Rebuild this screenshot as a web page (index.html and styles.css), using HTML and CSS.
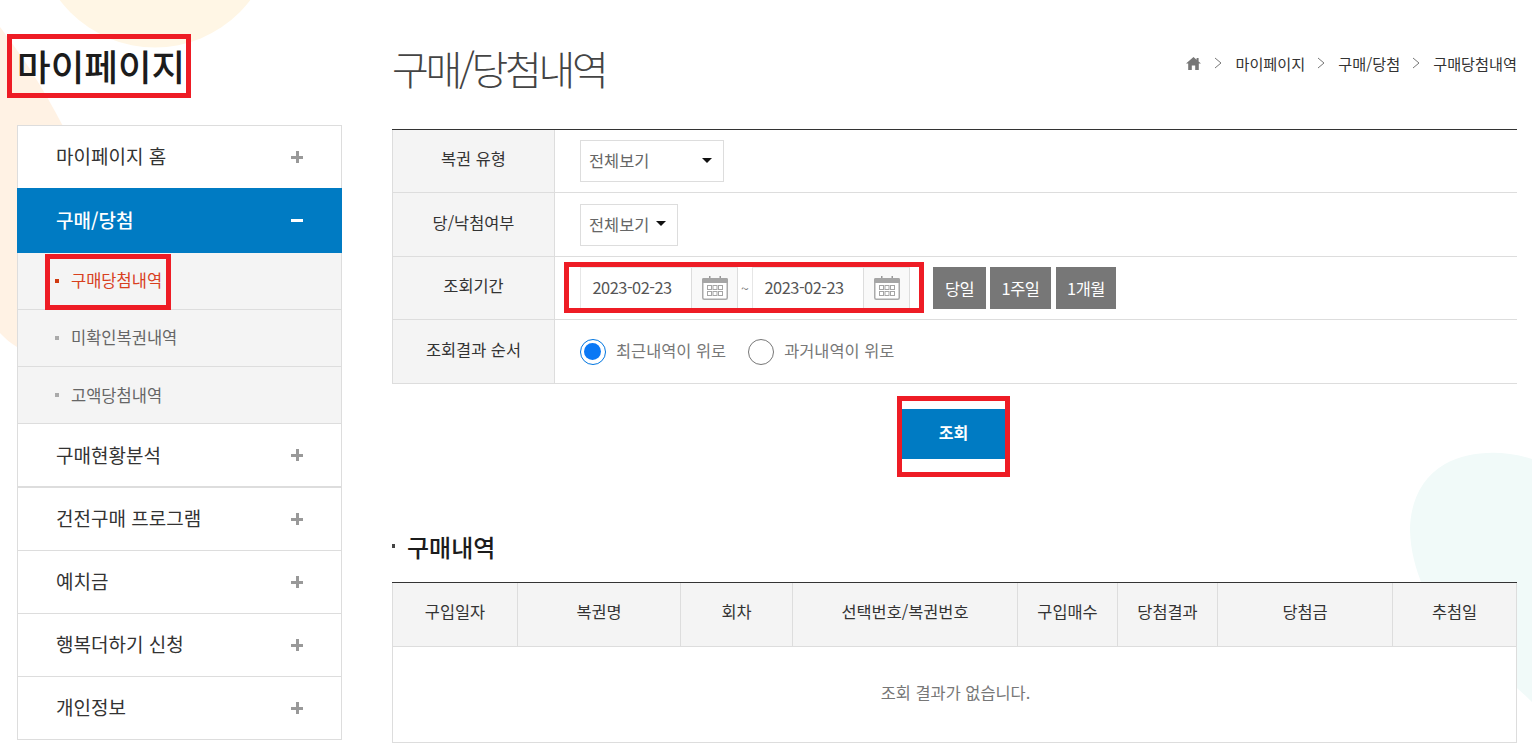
FILE: index.html
```html
<!DOCTYPE html>
<html lang="ko">
<head>
<meta charset="utf-8">
<title>구매/당첨내역</title>
<link rel="stylesheet" href="styles.css">
</head>
<body>
<svg class="bg-shapes" width="1532" height="748" viewBox="0 0 1532 748" aria-hidden="true">
  <circle cx="155" cy="-72" r="119.5" fill="#fff6e5"/>
  <path d="M0 27C30 66 50 100 70 140C100 220 60 330 17 347C10 343 5 338 0 333Z" fill="#fff2e4"/>
  <path d="M1532 459C1505 450 1470 450 1445 464C1420 478 1410 505 1410 530C1411 570 1430 610 1460 640C1490 665 1515 685 1532 702Z" fill="#f1faf9"/>
</svg>
<div class="page">
  <aside class="sidebar">
    <h1 class="side-title">마이페이지</h1>
    <nav class="menu">
      <a class="menu-item">마이페이지 홈<span class="plus"></span></a>
      <a class="menu-item active">구매/당첨<span class="minus"></span></a>
      <ul class="submenu">
        <li class="current">구매당첨내역</li>
        <li>미확인복권내역</li>
        <li>고액당첨내역</li>
      </ul>
      <a class="menu-item thick">구매현황분석<span class="plus"></span></a>
      <a class="menu-item">건전구매 프로그램<span class="plus"></span></a>
      <a class="menu-item">예치금<span class="plus"></span></a>
      <a class="menu-item">행복더하기 신청<span class="plus"></span></a>
      <a class="menu-item last">개인정보<span class="plus"></span></a>
    </nav>
  </aside>
  <main class="content">
    <header class="head">
      <h2 class="page-title">구매/당첨내역</h2>
      <div class="crumbs">
        <svg class="home" width="15" height="13" viewBox="0 0 15 13"><path d="M7.5 0L0 6.6h2.2V13h3.6V8.6h3.4V13h3.6V6.6H15L12.6 4.4V1h-2v1.7z" fill="#777"/></svg>
        <svg class="chev" width="8" height="12" viewBox="0 0 8 12"><path d="M1 1l6 5-6 5" fill="none" stroke="#777"/></svg>
        <span>마이페이지</span>
        <svg class="chev" width="8" height="12" viewBox="0 0 8 12"><path d="M1 1l6 5-6 5" fill="none" stroke="#777"/></svg>
        <span>구매/당첨</span>
        <svg class="chev" width="8" height="12" viewBox="0 0 8 12"><path d="M1 1l6 5-6 5" fill="none" stroke="#777"/></svg>
        <span>구매당첨내역</span>
      </div>
    </header>

    <section class="filter">
      <div class="f-label">복권 유형</div>
      <div class="f-value"><div class="select wide">전체보기<i class="caret"></i></div></div>
      <div class="f-label">당/낙첨여부</div>
      <div class="f-value"><div class="select narrow">전체보기<i class="caret"></i></div></div>
      <div class="f-label">조회기간</div>
      <div class="f-value">
        <div class="date"><span class="date-text">2023-02-23</span><span class="cal"><svg width="26" height="24" viewBox="0 0 26 24"><use href="#calendar"/></svg></span></div>
        <span class="tilde">~</span>
        <div class="date"><span class="date-text">2023-02-23</span><span class="cal"><svg width="26" height="24" viewBox="0 0 26 24"><use href="#calendar"/></svg></span></div>
        <button class="range b1">당일</button>
        <button class="range b2">1주일</button>
        <button class="range b3">1개월</button>
      </div>
      <div class="f-label">조회결과 순서</div>
      <div class="f-value">
        <span class="radio on"></span><span class="radio-text">최근내역이 위로</span>
        <span class="radio"></span><span class="radio-text">과거내역이 위로</span>
      </div>
    </section>

    <div class="search-row"><button class="search">조회</button></div>

    <h3 class="section-title">구매내역</h3>

    <section class="result">
      <div class="th">구입일자</div>
      <div class="th">복권명</div>
      <div class="th">회차</div>
      <div class="th">선택번호/복권번호</div>
      <div class="th">구입매수</div>
      <div class="th">당첨결과</div>
      <div class="th">당첨금</div>
      <div class="th">추첨일</div>
      <div class="empty">조회 결과가 없습니다.</div>
    </section>
  </main>
</div>

<div class="mark mark-title"></div>
<div class="mark mark-side"></div>
<div class="mark mark-date"></div>
<div class="mark mark-btn"></div>

<svg width="0" height="0" class="defs" aria-hidden="true">
  <symbol id="calendar" viewBox="0 0 26 24">
    <path d="M7 0h1.500v3H7zM17.500 0H19v3h-1.500z" fill="#999"/>
    <rect x="0.750" y="2.750" width="24.500" height="20.500" rx="1.500" fill="#fff" stroke="#aaa" stroke-width="1.500"/>
    <rect x="0" y="2" width="26" height="5" rx="1.500" fill="#a5a5a5"/>
    <g fill="none" stroke="#a5a5a5">
      <rect x="5.500" y="9.500" width="4" height="4"/><rect x="11" y="9.500" width="4" height="4"/><rect x="16.500" y="9.500" width="4" height="4"/>
      <rect x="5.500" y="15.500" width="4" height="4"/><rect x="11" y="15.500" width="4" height="4"/><rect x="16.500" y="15.500" width="4" height="4"/>
    </g>
  </symbol>
</svg>
</body>
</html>
```
FILE: styles.css
```css
* { box-sizing: border-box; }
html, body { margin: 0; height: 748px; overflow: hidden; background: #fff; }
body {
  position: relative;
  font-family: "Noto Sans CJK KR", "Noto Sans", sans-serif;
  color: #333;
  font-size: 16.4px;
}
.bg-shapes { position: absolute; left: 0; top: 0; z-index: 0; }
.defs { position: absolute; }
.page { position: relative; z-index: 1; display: flex; padding-left: 17px; }

/* sidebar */
.sidebar { width: 325px; flex: none; }
.side-title {
  margin: 0;
  height: 125px;
  padding-top: 37px;
  font-size: 36.6px;
  line-height: 58px;
  font-weight: 500;
  color: #1c1c1c;
}
.menu-item {
  display: flex;
  align-items: center;
  justify-content: space-between;
  height: 63px;
  padding: 0 38px 3px;
  border: 1px solid #ddd;
  border-bottom-width: 0;
  font-size: 19px;
  color: #333;
  background: #fff;
}
.menu-item.active {
  height: 65px;
  padding-bottom: 4px;
  background: #007bc3;
  border-color: #007bc3;
  color: #fff;
  font-weight: 500;
}
.menu-item.thick { height: 64px; padding-bottom: 2px; border-bottom-width: 1px; }
.menu-item.last { height: 64px; border-bottom-width: 1px; }
.plus, .minus { position: relative; top: 1px; display: block; width: 12px; height: 12px; flex: none; }
.plus::before, .minus::before {
  content: "";
  position: absolute; left: 0; top: 5px; width: 12px; height: 3px; background: #999;
}
.plus::after {
  content: "";
  position: absolute; left: 5px; top: 0; width: 3px; height: 12px; background: #999;
}
.minus::before { background: #fff; }

.submenu {
  list-style: none;
  margin: 0;
  padding: 0;
  border: solid #ddd;
  border-width: 0 1px;
  background: #f4f4f4;
}
.submenu li {
  position: relative;
  height: 57px;
  line-height: 54px;
  padding-left: 53px;
  font-size: 16.5px;
  color: #666;
  border-bottom: 1px solid #ddd;
}
.submenu li:last-child { height: 56px; line-height: 56px; border-bottom: 0; }
.submenu li::before {
  content: "";
  position: absolute; left: 37px; top: 26px; width: 4px; height: 4px; background: #aaa;
}
.submenu li.current { color: #d8401e; }
.submenu li.current::before { background: #d03a10; }

/* main */
.content { width: 1125px; margin-left: 50px; flex: none; }
.head { display: flex; justify-content: space-between; height: 129px; }
.page-title {
  margin: 0;
  padding-top: 38px;
  font-size: 40px;
  line-height: 60px;
  font-weight: 200;
  color: #444;
  letter-spacing: -3.3px;
}
.crumbs {
  display: flex;
  align-items: center;
  height: 24px;
  margin-top: 51px;
  font-size: 15.2px;
  color: #333;
}
.home { margin-right: 13px; }
.chev { margin-right: 13px; }
.crumbs span { margin-right: 12px; }
.crumbs span:last-child { margin-right: 0; }

.filter {
  display: grid;
  grid-template-columns: 163px 1fr;
  grid-template-rows: 63px 64px 63px 64px;
  border-top: 1px solid #333;
}
.f-label {
  display: flex;
  align-items: center;
  justify-content: center;
  background: #f4f4f4;
  border: solid #ddd;
  border-width: 0 1px 1px 1px;
  color: #333;
  padding-bottom: 6px;
}
.f-value {
  display: flex;
  align-items: center;
  padding-left: 25px;
  border: solid #ddd;
  border-width: 0 0 1px 0;
  background: #fff;
}
.select {
  display: flex;
  align-items: center;
  justify-content: space-between;
  height: 42px;
  padding: 0 11px 2px 8px;
  border: 1px solid #ddd;
  background: #fff;
  color: #666;
}
.select.wide { width: 144px; }
.select.narrow { width: 98px; }
.caret {
  width: 0; height: 0;
  border: solid transparent;
  border-width: 5px 5px 0;
  border-top-color: #111;
}
.date {
  display: flex;
  width: 158px;
  height: 42px;
  background: #fff;
  border: 1px solid #e6e6e6;
  border-right-color: #ddd;
}
.date-text {
  width: 110px;
  padding-left: 11.5px;
  line-height: 38px;
  color: #555;
  letter-spacing: -0.5px;
}
.cal {
  flex: 1;
  display: flex;
  align-items: center;
  justify-content: center;
  background: #f9f9f9;
  border-left: 1px solid #ddd;
}
.tilde { width: 14px; text-align: center; font-size: 14px; color: #777; }
.range {
  height: 42px;
  border: 0;
  padding: 0;
  background: #777;
  color: #fff;
  font: inherit;
  letter-spacing: -0.5px;
}
.b1 { width: 53px; margin-left: 23px; }
.b2 { width: 61px; margin-left: 4px; }
.b3 { width: 60px; margin-left: 5px; }

.radio {
  position: relative;
  width: 26px; height: 26px;
  border-radius: 50%;
  border: 1.500px solid #777;
  background: #fff;
  flex: none;
}
.radio.on { border-color: #0075e0; }
.radio.on::after {
  content: "";
  position: absolute; left: 3px; top: 3px; width: 17px; height: 17px;
  border-radius: 50%;
  background: #0a78f5;
}
.radio-text { margin: 0 22px 0 10px; color: #777; padding-bottom: 3px; }

.search-row { display: flex; justify-content: center; padding: 25px 2px 0 0; height: 145px; }
.search {
  width: 103px;
  height: 50px;
  border: 0;
  padding: 0 0 4px;
  background: #007bc3;
  color: #fff;
  font: 700 16px "Noto Sans CJK KR", sans-serif;
}
.section-title {
  position: relative;
  margin: 0;
  height: 53px;
  padding-left: 15px;
  font-size: 24px;
  line-height: 36px;
  font-weight: 500;
  color: #1c1c1c;
}
.section-title::before {
  content: "";
  position: absolute; left: 0; top: 15px; width: 3px; height: 4px; background: #444;
}
.result {
  display: grid;
  grid-template-columns: 126px 163px 112px 225px 100px 100px 175px 124px;
  grid-template-rows: 64px 96px;
  border-top: 1px solid #333;
  background: #fff;
}
.th {
  display: flex;
  align-items: center;
  justify-content: center;
  background: #f4f4f4;
  border: solid #ddd;
  border-width: 0 1px 1px 0;
  padding-bottom: 7px;
  color: #333;
}
.th:first-child { border-left-width: 1px; }
.empty {
  grid-column: 1 / -1;
  display: flex;
  align-items: center;
  justify-content: center;
  border: solid #ddd;
  border-width: 0 1px 1px;
  padding: 0 0 6px 2px;
  background: #fff;
  color: #777;
}

/* annotation frames */
.mark { position: absolute; z-index: 2; border: 5px solid #ee1c25; pointer-events: none; }
.mark-title { left: 7px; top: 34px; width: 184px; height: 64px; }
.mark-side { left: 45px; top: 254px; width: 126px; height: 56px; }
.mark-date { left: 564px; top: 262px; width: 360px; height: 51px; }
.mark-btn { left: 897px; top: 396px; width: 113px; height: 81px; }
```
